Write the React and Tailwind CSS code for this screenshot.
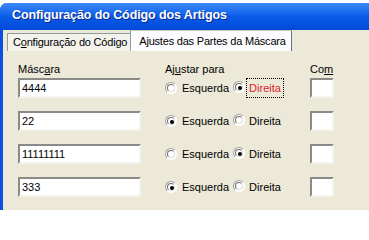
const rows = [
  { value: "4444", align: "right", focus: true },
  { value: "22", align: "left" },
  { value: "11111111", align: "right" },
  { value: "333", align: "left" },
];

function Radio({ checked }) {
  return (
    <span className="relative inline-block h-[12px] w-[12px] shrink-0 rounded-full border border-t-[#a0a0a0] border-l-[#a0a0a0] border-r-white border-b-white bg-white">
      <span className="absolute inset-[1px] rounded-full border border-t-[#6f6f6f] border-l-[#6f6f6f] border-r-[#dcdcdc] border-b-[#dcdcdc]" />
      {checked && (
        <span className="absolute left-[4px] top-[4px] h-[4px] w-[4px] rounded-full bg-black" />
      )}
    </span>
  );
}

function Field({ value, className = "" }) {
  return (
    <div
      className={
        "flex h-[20px] items-center border-2 border-t-[#8a8a86] border-l-[#8a8a86] border-r-[#f4f3ee] border-b-[#f4f3ee] bg-white pl-[2px] text-[11px] text-black " +
        className
      }
    >
      {value}
    </div>
  );
}

function Row({ value, align, focus }) {
  return (
    <div className="flex h-[20px] items-center">
      <Field value={value} className="w-[123px]" />
      <div className="ml-[24px] flex items-center">
        <Radio checked={align === "left"} />
        <span className="ml-[5px] text-[11px]">Esquerda</span>
        <span className="ml-[4px]">
          <Radio checked={align === "right"} />
        </span>
        <span
          className={
            "ml-[1px] px-[2px] py-[1px] text-[11px] " +
            (focus ? "border border-dotted border-black text-[#e0212b]" : "border border-transparent")
          }
        >
          Direita
        </span>
      </div>
      <Field value="" className="ml-auto mr-[35px] w-[24px]" />
    </div>
  );
}

export default function App() {
  return (
    <div
      className="min-h-[210px] w-[369px] bg-white pt-[3px]"
      style={{ fontFamily: '"Liberation Sans", Arial, sans-serif' }}
    >
      <div className="min-h-[207px] rounded-tl-[7px] border-l-[3px] border-[#0b4fe0] bg-[#ece9d8]">
        <div className="-ml-[3px] flex h-[27px] items-center rounded-tl-[7px] bg-gradient-to-b from-[#3d8af7] via-[#0a5ae8] to-[#0349d8] pl-[12px] pb-[2px]">
          <span className="text-[12.5px] font-bold tracking-[-0.1px] text-white [text-shadow:1px_1px_0_#0a2a8a]">
            Configuração do Código dos Artigos
          </span>
        </div>
        <div className="text-black">
          <div className="flex h-[21px] items-end pl-[4px] pt-[2px] tracking-[-0.2px]">
            <div className="flex h-[18px] items-center border-l border-t border-[#919b9c] bg-[#f3f2ec] pl-[5px] pr-[3px] text-[11px]">
              <span>
                C<span className="underline">o</span>nfiguração do Código
              </span>
            </div>
            <div className="-mt-[2px] flex h-[21px] items-center border-x border-t border-r-[#6f6f6f] border-l-[#919b9c] border-t-[#c9c7ba] bg-[#fcfcfe] pl-[8px] pr-[5px] text-[11px]">
              <span>
                A<span className="underline">j</span>ustes das Partes da Máscara
              </span>
            </div>
          </div>
          <div className="pl-[15px] pt-[11px]">
            <div className="flex h-[14px] items-center text-[11px]">
              <span className="w-[147px]">
                Másc<span className="underline">a</span>ra
              </span>
              <span className="w-[145px]">
                Aj<span className="underline">u</span>star para
              </span>
              <span>
                Co<span className="underline">m</span>
              </span>
            </div>
            <div className="mt-[2px] flex flex-col gap-[13px]">
              {rows.map((r) => (
                <Row key={r.value} {...r} />
              ))}
            </div>
          </div>
        </div>
      </div>
    </div>
  );
}
